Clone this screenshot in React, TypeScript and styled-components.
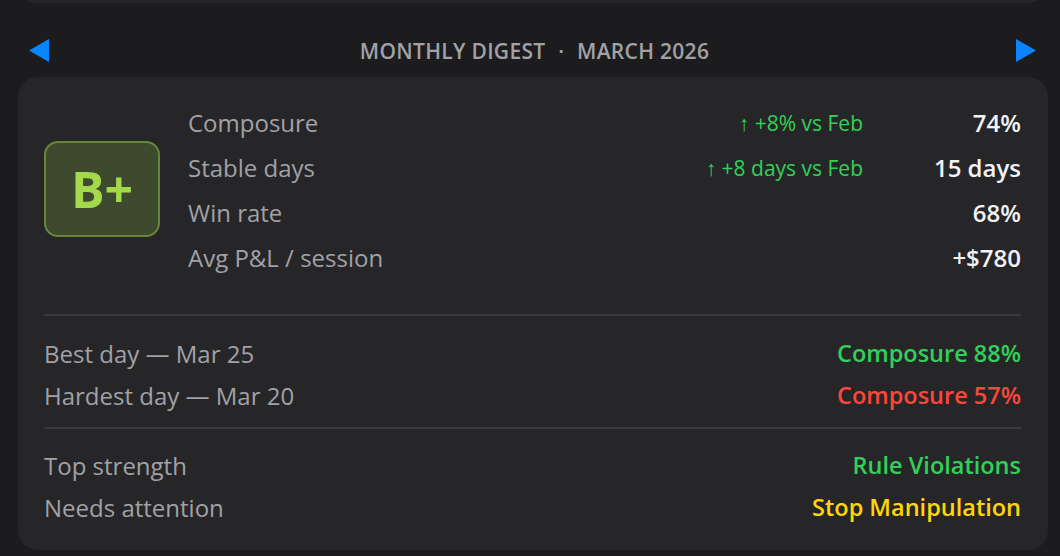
import styled, {createGlobalStyle} from 'styled-components';

const colors = {
  page: '#1c1c1e',
  card: '#262628',
  line: '#3a3a3c',
  label: '#a1a1a6',
  value: '#f2f2f7',
  green: '#30d158',
  red: '#ff453a',
  yellow: '#ffd60a',
  blue: '#0a84ff',
};

const GlobalStyle = createGlobalStyle`
  html, body {
    margin: 0;
    padding: 0;
    background: ${colors.page};
  }
  body {
    font-family: 'Open Sans', 'Noto Sans', sans-serif;
    -webkit-font-smoothing: antialiased;
  }
`;

interface Metric {
  label: string;
  delta?: string;
  value: string;
}

const metrics: Metric[] = [
  {label: 'Composure', delta: '↑ +8% vs Feb', value: '74%'},
  {label: 'Stable days', delta: '↑ +8 days vs Feb', value: '15 days'},
  {label: 'Win rate', value: '68%'},
  {label: 'Avg P&L / session', value: '+$780'},
];

type Tone = 'green' | 'red' | 'yellow';

const days: {label: string; value: string; tone: Tone}[] = [
  {label: 'Best day — Mar 25', value: 'Composure 88%', tone: 'green'},
  {label: 'Hardest day — Mar 20', value: 'Composure 57%', tone: 'red'},
];

const focus: {label: string; value: string; tone: Tone}[] = [
  {label: 'Top strength', value: 'Rule Violations', tone: 'green'},
  {label: 'Needs attention', value: 'Stop Manipulation', tone: 'yellow'},
];

function Arrow({dir}: {dir: 'left' | 'right'}) {
  return (
    <ArrowButton aria-label={dir === 'left' ? 'Previous month' : 'Next month'}>
      <svg width="20" height="23" viewBox="0 0 20 23">
        {dir === 'left' ? (
          <polygon points="0,11.5 20,0 20,23" fill={colors.blue} />
        ) : (
          <polygon points="20,11.5 0,0 0,23" fill={colors.blue} />
        )}
      </svg>
    </ArrowButton>
  );
}

function App() {
  return (
    <Page>
      <GlobalStyle />
      <PrevCardClip>
        <PrevCard />
      </PrevCardClip>

      <Header>
        <Arrow dir="left" />
        <Title>
          Monthly Digest <Dot>·</Dot> March 2026
        </Title>
        <Arrow dir="right" />
      </Header>

      <Card>
        <Summary>
          <Grade>B+</Grade>
          <MetricList>
            {metrics.map(m => (
              <MetricRow key={m.label}>
                <Label>{m.label}</Label>
                <Delta>{m.delta}</Delta>
                <Value>{m.value}</Value>
              </MetricRow>
            ))}
          </MetricList>
        </Summary>

        <Divider $top={34} />
        <Section $top={16}>
          {days.map(d => (
            <PairRow key={d.label}>
              <Label>{d.label}</Label>
              <Highlight $tone={d.tone}>{d.value}</Highlight>
            </PairRow>
          ))}
        </Section>

        <Divider $top={11} />
        <Section $top={15}>
          {focus.map(f => (
            <PairRow key={f.label}>
              <Label>{f.label}</Label>
              <Highlight $tone={f.tone}>{f.value}</Highlight>
            </PairRow>
          ))}
        </Section>
      </Card>
    </Page>
  );
}

const Page = styled.div`
  width: 1060px;
  height: 556px;
  box-sizing: border-box;
  padding: 0 12px 0 18px;
  overflow: hidden;
  background: ${colors.page};
`;

const PrevCardClip = styled.div`
  height: 3px;
  overflow: hidden;
  display: flex;
  flex-direction: column;
  justify-content: flex-end;
`;

const PrevCard = styled.div`
  flex: 0 0 60px;
  background: ${colors.card};
  border-radius: 20px;
`;

const Header = styled.div`
  margin-top: 36px;
  height: 23px;
  padding: 0 12px 0 11px;
  display: flex;
  align-items: center;
  justify-content: space-between;
`;

const ArrowButton = styled.button`
  border: 0;
  padding: 0;
  background: none;
  display: flex;
  cursor: pointer;
`;

const Title = styled.div`
  color: ${colors.label};
  font-size: 21px;
  font-weight: 600;
  letter-spacing: 0.3px;
  text-transform: uppercase;
  white-space: nowrap;
  margin-left: 4px;
`;

const Dot = styled.span`
  margin: 0 7px;
`;

const Card = styled.div`
  margin-top: 15px;
  background: ${colors.card};
  border-radius: 20px;
  padding: 23px 27px 22px 26px;
`;

const Summary = styled.div`
  display: flex;
  align-items: center;
  gap: 28px;
`;

const Grade = styled.div`
  flex: 0 0 auto;
  width: 116px;
  height: 96px;
  box-sizing: border-box;
  border: 2px solid #68863a;
  border-radius: 14px;
  background: #3d4a2d;
  color: #a3d94a;
  font-size: 50px;
  font-weight: 700;
  display: flex;
  align-items: center;
  justify-content: center;
  margin-top: -3px;
`;

const MetricList = styled.div`
  flex: 1;
`;

const MetricRow = styled.div`
  height: 45px;
  display: grid;
  grid-template-columns: auto 1fr 158px;
  align-items: center;
`;

const Label = styled.span`
  color: ${colors.label};
  font-size: 24px;
`;

const Delta = styled.span`
  color: ${colors.green};
  font-size: 21px;
  text-align: right;
`;

const Value = styled.span`
  color: ${colors.value};
  font-size: 24px;
  font-weight: 600;
  text-align: right;
`;

const Divider = styled.div<{$top: number}>`
  margin-top: ${p => p.$top}px;
  height: 2px;
  background: ${colors.line};
`;

const Section = styled.div<{$top: number}>`
  margin-top: ${p => p.$top}px;
`;

const PairRow = styled.div`
  height: 42px;
  display: flex;
  align-items: center;
  justify-content: space-between;
`;

const Highlight = styled.span<{$tone: Tone}>`
  color: ${p => colors[p.$tone]};
  font-size: 23.5px;
  font-weight: 600;
`;

export default App;
